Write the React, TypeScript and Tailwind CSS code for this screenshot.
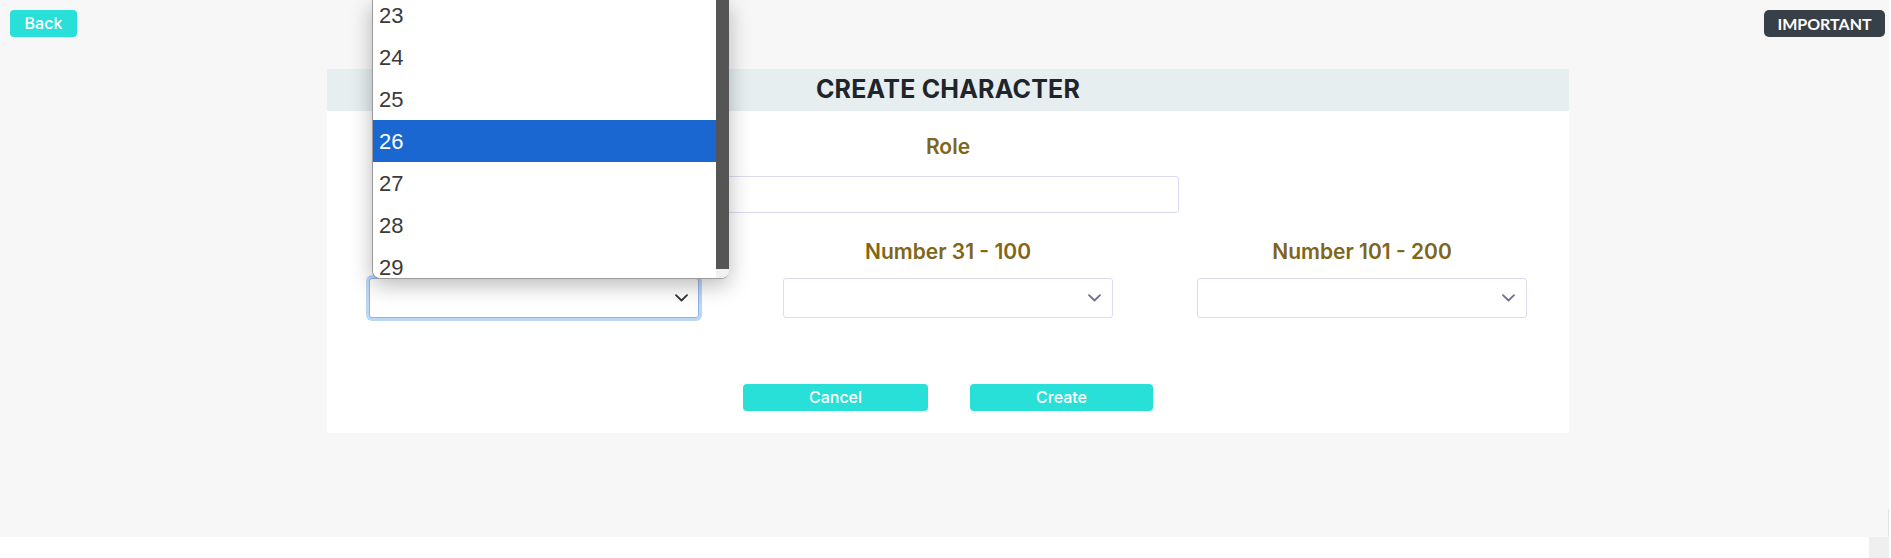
import React from "react";

const Chevron = ({ color }: { color: string }) => (
  <svg width="13" height="8" viewBox="0 0 13 8" fill="none">
    <path d="M1 1.2L6.5 6.5L12 1.2" stroke={color} strokeWidth="1.8" strokeLinecap="round" strokeLinejoin="round" />
  </svg>
);

const items = ["23", "24", "25", "26", "27", "28", "29", "30"];

export default function App() {
  return (
    <div
      className="relative w-[1891px] h-[558px] overflow-hidden bg-white"
      style={{ fontFamily: "Inter, 'Noto Sans', sans-serif" }}
    >
      <div className="relative w-[1889px] h-[537px] bg-[#f7f7f7]">
        <div className="flex justify-between pl-[10px] pr-[4px] pt-[10px]">
          <button className="w-[67px] h-[27px] rounded-[4px] bg-[#29e0d9] text-white text-[16px] leading-[27px] font-medium">
            Back
          </button>
          <button
            className="w-[121px] h-[27px] rounded-[5px] bg-[#373f47] text-white text-[16px] leading-[27px] font-bold"
            style={{ fontFamily: "Lato, sans-serif" }}
          >
            IMPORTANT
          </button>
        </div>

        <div className="ml-[327px] mt-[32px] w-[1242px]">
          <div className="h-[42px] bg-[#e6eef0] flex items-center justify-center">
            <h1 className="text-[25px] font-bold text-[#212529] tracking-[0.2px]">CREATE CHARACTER</h1>
          </div>
          <div className="h-[322px] bg-white flex flex-col items-center">
            <div className="pt-[24px] text-[21px] leading-[24px] font-semibold text-[#7f661a]">Role</div>
            <input className="mt-[17px] w-[462px] h-[37px] border border-[#dddbef] rounded-[3px] outline-none" />
            <div className="mt-[27px] w-full grid grid-cols-3">
              {[
                { label: "Number 1 - 30", focus: true },
                { label: "Number 31 - 100", focus: false },
                { label: "Number 101 - 200", focus: false },
              ].map((c) => (
                <div key={c.label} className="flex flex-col items-center">
                  <div className="text-[21px] leading-[24px] font-semibold text-[#7f661a]">{c.label}</div>
                  <div
                    className={
                      c.focus
                        ? "mt-[14px] w-[330px] h-[40px] rounded-[3px] border border-[#8db5ec] ring-[3px] ring-[#bcd6f6] flex items-center justify-end pr-[10px] bg-white"
                        : "mt-[14px] w-[330px] h-[40px] rounded-[3px] border border-[#dddbef] flex items-center justify-end pr-[11px] bg-white"
                    }
                  >
                    <Chevron color={c.focus ? "#333" : "#6f6e92"} />
                  </div>
                </div>
              ))}
            </div>
            <div className="mt-[66px] flex gap-[42px]">
              <button className="w-[185px] h-[27px] rounded-[4px] bg-[#29e0d9] text-white text-[16px] leading-[27px] font-medium">
                Cancel
              </button>
              <button className="w-[183px] h-[27px] rounded-[4px] bg-[#29e0d9] text-white text-[16px] leading-[27px] font-medium">
                Create
              </button>
            </div>
          </div>
        </div>

        <div
          className="absolute left-[372px] top-0 w-[357px] h-[279px] bg-white overflow-hidden rounded-b-[8px] border-l border-b border-[#9a9a9a] shadow-[0_6px_22px_rgba(0,0,0,0.28)]"
          style={{ fontFamily: "'Liberation Sans', Arial, sans-serif" }}
        >
          <div className="flex h-full">
            <div className="flex-1 -mt-[6px]">
              {items.map((n) => (
                <div
                  key={n}
                  className={
                    n === "26"
                      ? "h-[42px] pl-[6px] flex items-center text-[22px] text-white bg-[#1a67d2]"
                      : "h-[42px] pl-[6px] flex items-center text-[22px] text-[#3b3b3b]"
                  }
                >
                  {n}
                </div>
              ))}
            </div>
            <div className="w-[13px] flex flex-col">
              <div className="h-[269px] bg-[#555555]" />
              <div className="flex-1 bg-[#f1f1f1]" />
            </div>
          </div>
        </div>

        <div className="absolute right-0 top-[509px] w-px h-[28px] bg-[#e2e2e2]" />
      </div>
      <div className="absolute left-[1869px] top-[537px] w-[20px] h-[21px] bg-[#efefef]" />
    </div>
  );
}
